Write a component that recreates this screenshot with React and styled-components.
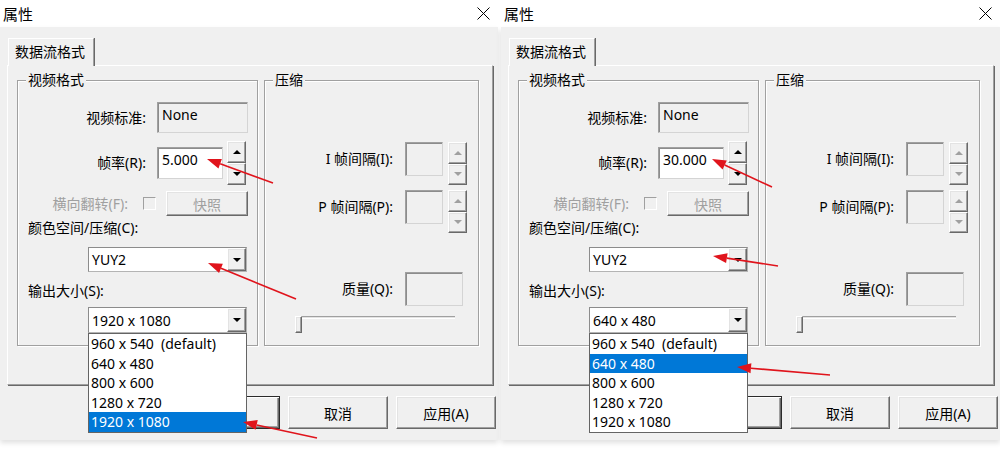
import styled, { createGlobalStyle } from 'styled-components';

const GlobalStyle = createGlobalStyle`
  html, body {
    margin: 0;
    padding: 0;
    background: #fff;
  }
  body {
    font-family: "Noto Sans", "Noto Sans CJK SC", sans-serif;
    font-size: 14px;
    color: #000;
  }
`;

const raised = `
  background: #f0f0f0;
  border: 1px solid;
  border-color: #fff #696969 #696969 #fff;
  box-shadow: inset -1px -1px 0 #a0a0a0, inset 1px 1px 0 #e3e3e3;
`;

const Page = styled.div`
  display: flex;
  gap: 3px;
  width: 1000px;
  height: 452px;
  overflow: hidden;
`;

const Window = styled.div`
  position: relative;
  flex: none;
  width: ${(p) => p.$w}px;
`;

const TitleBar = styled.div`
  height: 27px;
  display: flex;
  align-items: center;
  justify-content: space-between;
  padding: 0 8px 0 3px;
  background: #fff;
`;

const Title = styled.span`
  font-size: 15px;
  line-height: 18px;
`;

const Body = styled.div`
  height: 413px;
  box-sizing: border-box;
  padding: 11px 2px 0 7px;
  background: #f0f0f0;
  box-shadow: 0 3px 5px rgba(0, 0, 0, 0.12);
`;

const TabStrip = styled.div`
  display: flex;
  height: 27px;
  padding-left: 1px;
  position: relative;
  z-index: 1;
`;

const Tab = styled.div`
  height: 28px;
  box-sizing: border-box;
  padding: 0 8px 0 6px;
  line-height: 26px;
  background: #f0f0f0;
  border-top: 1px solid #fff;
  border-left: 1px solid #fff;
  border-right: 1px solid #a0a0a0;
  box-shadow: 1px 0 0 #696969;
`;

const Panel = styled.div`
  width: 486px;
  height: 320px;
  box-sizing: border-box;
  display: flex;
  align-items: flex-start;
  gap: 6px;
  padding: 14px 0 0 9px;
  border-top: 1px solid #fff;
  border-left: 1px solid #fff;
  border-right: 1px solid #a0a0a0;
  border-bottom: 1px solid #a0a0a0;
  box-shadow: 1px 1px 0 #696969;
`;

const Group = styled.div`
  position: relative;
  flex: none;
  width: ${(p) => p.$w}px;
  height: 266px;
  box-sizing: border-box;
  padding: ${(p) => p.$pad};
  border: 1px solid #a0a0a0;
  box-shadow: inset 1px 1px 0 #fff, 1px 1px 0 #fff;
`;

const GroupLabel = styled.span`
  position: absolute;
  top: -10px;
  left: 8px;
  padding: 0 2px;
  line-height: 18px;
  background: #f0f0f0;
`;

const Row = styled.div`
  display: flex;
  align-items: ${(p) => p.$align || 'center'};
  margin-top: ${(p) => p.$mt || 0}px;
`;

const Label = styled.span`
  flex: none;
  width: ${(p) => (p.$w ? `${p.$w}px` : 'auto')};
  margin-right: ${(p) => p.$gap || 0}px;
  text-align: ${(p) => (p.$w ? 'right' : 'left')};
  line-height: ${(p) => p.$lh || 18}px;
  white-space: nowrap;
  color: ${(p) => (p.$disabled ? '#a0a0a0' : '#000')};
`;

const Field = styled.div`
  flex: none;
  width: ${(p) => p.$w}px;
  height: ${(p) => p.$h}px;
  box-sizing: border-box;
  padding: 3px 0 0 4px;
  line-height: 18px;
  background: ${(p) => (p.$white ? '#fff' : '#f0f0f0')};
  border: 1px solid;
  border-color: #a0a0a0 #d4d4d4 #d4d4d4 #a0a0a0;
  box-shadow: inset 1px 1px 0 #8c8c8c;
`;

const Spin = styled.div`
  flex: none;
  display: flex;
  flex-direction: column;
  width: 19px;
  height: ${(p) => p.$h}px;
  margin-left: ${(p) => p.$ml}px;
`;

const SpinButton = styled.div`
  flex: 1;
  box-sizing: border-box;
  display: flex;
  align-items: center;
  justify-content: center;
  ${raised}
`;

const Tri = styled.span`
  width: 0;
  height: 0;
  border-left: 4px solid transparent;
  border-right: 4px solid transparent;
  ${(p) =>
    p.$up
      ? `border-bottom: 4px solid ${p.$c || '#000'};`
      : `border-top: 4px solid ${p.$c || '#000'};`}
`;

const Check = styled.div`
  flex: none;
  width: 13px;
  height: 13px;
  box-sizing: border-box;
  margin-right: 10px;
  border: 1px solid;
  border-color: #a0a0a0 #fff #fff #a0a0a0;
  background: #f0f0f0;
`;

const Button = styled.div`
  flex: none;
  width: ${(p) => p.$w}px;
  height: ${(p) => p.$h || 33}px;
  box-sizing: border-box;
  display: flex;
  align-items: center;
  justify-content: center;
  color: ${(p) => (p.$disabled ? '#a0a0a0' : '#000')};
  ${raised}
  ${(p) =>
    p.$default &&
    `border-color: #2b2b2b; box-shadow: inset 1px 1px 0 #fff, inset -1px -1px 0 #696969, inset -2px -2px 0 #a0a0a0;`}
`;

const Combo = styled.div`
  position: relative;
  flex: none;
  display: flex;
  width: 159px;
  height: ${(p) => p.$h}px;
  margin-left: 60px;
  box-sizing: border-box;
  background: #fff;
  border: 1px solid;
  border-color: #8c8c8c #b4b4b4 #b4b4b4 #8c8c8c;
`;

const ComboText = styled.div`
  flex: 1;
  display: flex;
  align-items: center;
  padding-left: 3px;
`;

const ComboButton = styled.div`
  width: 19px;
  box-sizing: border-box;
  display: flex;
  align-items: center;
  justify-content: center;
  ${raised}
`;

const DropList = styled.div`
  position: absolute;
  top: calc(100% + 1px);
  left: -1px;
  width: 159px;
  box-sizing: border-box;
  z-index: 10;
  background: #fff;
  border: 1px solid #646464;
`;

const DropItem = styled.div`
  height: 19.6px;
  line-height: 19.6px;
  padding-left: 2px;
  white-space: pre;
  background: ${(p) => (p.$selected ? '#0078d7' : 'transparent')};
  color: ${(p) => (p.$selected ? '#fff' : '#000')};
`;

const Slider = styled.div`
  position: relative;
  width: 160px;
  height: 17px;
  margin: 10px 0 0 30px;
`;

const Track = styled.div`
  margin: 7px 0 0 2px;
  width: 158px;
  height: 3px;
  box-sizing: border-box;
  border-top: 1px solid #a0a0a0;
  border-bottom: 1px solid #fff;
  background: #e3e3e3;
`;

const Thumb = styled.div`
  position: absolute;
  left: 0;
  top: 0;
  width: 7px;
  height: 17px;
  box-sizing: border-box;
  ${raised}
`;

const ButtonRow = styled.div`
  display: flex;
  justify-content: flex-end;
  gap: 8px;
  margin-top: 11px;
`;

const Overlay = styled.svg`
  position: absolute;
  left: 0;
  top: 0;
  z-index: 20;
  pointer-events: none;
`;

const SIZES = ['960 x 540  (default)', '640 x 480', '800 x 600', '1280 x 720', '1920 x 1080'];

const CloseIcon = () => (
  <svg width="13" height="13" viewBox="0 0 13 13">
    <path d="M0.5 0.5 L12.5 12.5 M12.5 0.5 L0.5 12.5" stroke="#000" strokeWidth="1" />
  </svg>
);

const Arrow = ({ from, to }) => {
  const [x1, y1] = from;
  const [x2, y2] = to;
  const len = Math.hypot(x2 - x1, y2 - y1);
  const ux = (x2 - x1) / len;
  const uy = (y2 - y1) / len;
  const bx = x2 - ux * 14;
  const by = y2 - uy * 14;
  const head = `${x2},${y2} ${bx - uy * 5},${by + ux * 5} ${bx + uy * 5},${by - ux * 5}`;
  return (
    <g>
      <line x1={x1} y1={y1} x2={bx} y2={by} stroke="#e0141c" strokeWidth="1.6" />
      <polygon points={head} fill="#e0141c" />
    </g>
  );
};

const Spinner = ({ h, ml, disabled }) => (
  <Spin $h={h} $ml={ml}>
    <SpinButton>
      <Tri $up $c={disabled ? '#a0a0a0' : '#000'} />
    </SpinButton>
    <SpinButton>
      <Tri $c={disabled ? '#a0a0a0' : '#000'} />
    </SpinButton>
  </Spin>
);

const PropertiesDialog = ({ width, rate, selected, arrows }) => (
  <Window $w={width}>
    <TitleBar>
      <Title>属性</Title>
      <CloseIcon />
    </TitleBar>
    <Body>
      <TabStrip>
        <Tab>数据流格式</Tab>
      </TabStrip>
      <Panel>
        <Group $w={241} $pad="21px 0 0 10px">
          <GroupLabel>视频格式</GroupLabel>
          <Row>
            <Label $w={118} $gap={11}>视频标准:</Label>
            <Field $w={91} $h={31}>None</Field>
          </Row>
          <Row $mt={8}>
            <Label $w={118} $gap={11}>帧率(R):</Label>
            <Field $w={66} $h={32} $white>{rate}</Field>
            <Spinner h={44} ml={4} />
          </Row>
          <Row $mt={6}>
            <Label $w={100} $gap={15} $disabled>横向翻转(F):</Label>
            <Check />
            <Button $w={82} $h={25} $disabled>快照</Button>
          </Row>
          <Row $mt={3}>
            <Label>颜色空间/压缩(C):</Label>
          </Row>
          <Row $mt={10}>
            <Combo $h={25}>
              <ComboText>YUY2</ComboText>
              <ComboButton><Tri /></ComboButton>
            </Combo>
          </Row>
          <Row $mt={10}>
            <Label>输出大小(S):</Label>
          </Row>
          <Row $mt={7}>
            <Combo $h={26}>
              <ComboText>{SIZES[selected]}</ComboText>
              <ComboButton><Tri /></ComboButton>
              <DropList>
                {SIZES.map((s, i) => (
                  <DropItem key={s} $selected={i === selected}>{s}</DropItem>
                ))}
              </DropList>
            </Combo>
          </Row>
        </Group>
        <Group $w={215} $pad="61px 0 0 0">
          <GroupLabel>压缩</GroupLabel>
          <Row $align="flex-start">
            <Label $w={128} $gap={12} $lh={34}>I 帧间隔(I):</Label>
            <Field $w={38} $h={34} />
            <Spinner h={43} ml={5} disabled />
          </Row>
          <Row $align="flex-start" $mt={5}>
            <Label $w={128} $gap={12} $lh={34}>P 帧间隔(P):</Label>
            <Field $w={38} $h={34} />
            <Spinner h={43} ml={5} disabled />
          </Row>
          <Row $align="flex-start" $mt={39}>
            <Label $w={128} $gap={12} $lh={34}>质量(Q):</Label>
            <Field $w={58} $h={34} />
          </Row>
          <Slider>
            <Track />
            <Thumb />
          </Slider>
        </Group>
      </Panel>
      <ButtonRow>
        <Button $w={97} $default>确定</Button>
        <Button $w={100}>取消</Button>
        <Button $w={100}>应用(A)</Button>
      </ButtonRow>
    </Body>
    <Overlay width={width} height={452}>
      {arrows.map((a, i) => (
        <Arrow key={i} from={a[0]} to={a[1]} />
      ))}
    </Overlay>
  </Window>
);

export default function App() {
  return (
    <>
      <GlobalStyle />
      <Page>
        <PropertiesDialog
          width={498}
          rate="5.000"
          selected={4}
          arrows={[
            [[273, 183], [207, 159]],
            [[296, 299], [208, 263]],
            [[317, 438], [243, 422]],
          ]}
        />
        <PropertiesDialog
          width={499}
          rate="30.000"
          selected={1}
          arrows={[
            [[271, 187], [211, 159]],
            [[277, 266], [212, 256]],
            [[329, 375], [236, 367]],
          ]}
        />
      </Page>
    </>
  );
}
